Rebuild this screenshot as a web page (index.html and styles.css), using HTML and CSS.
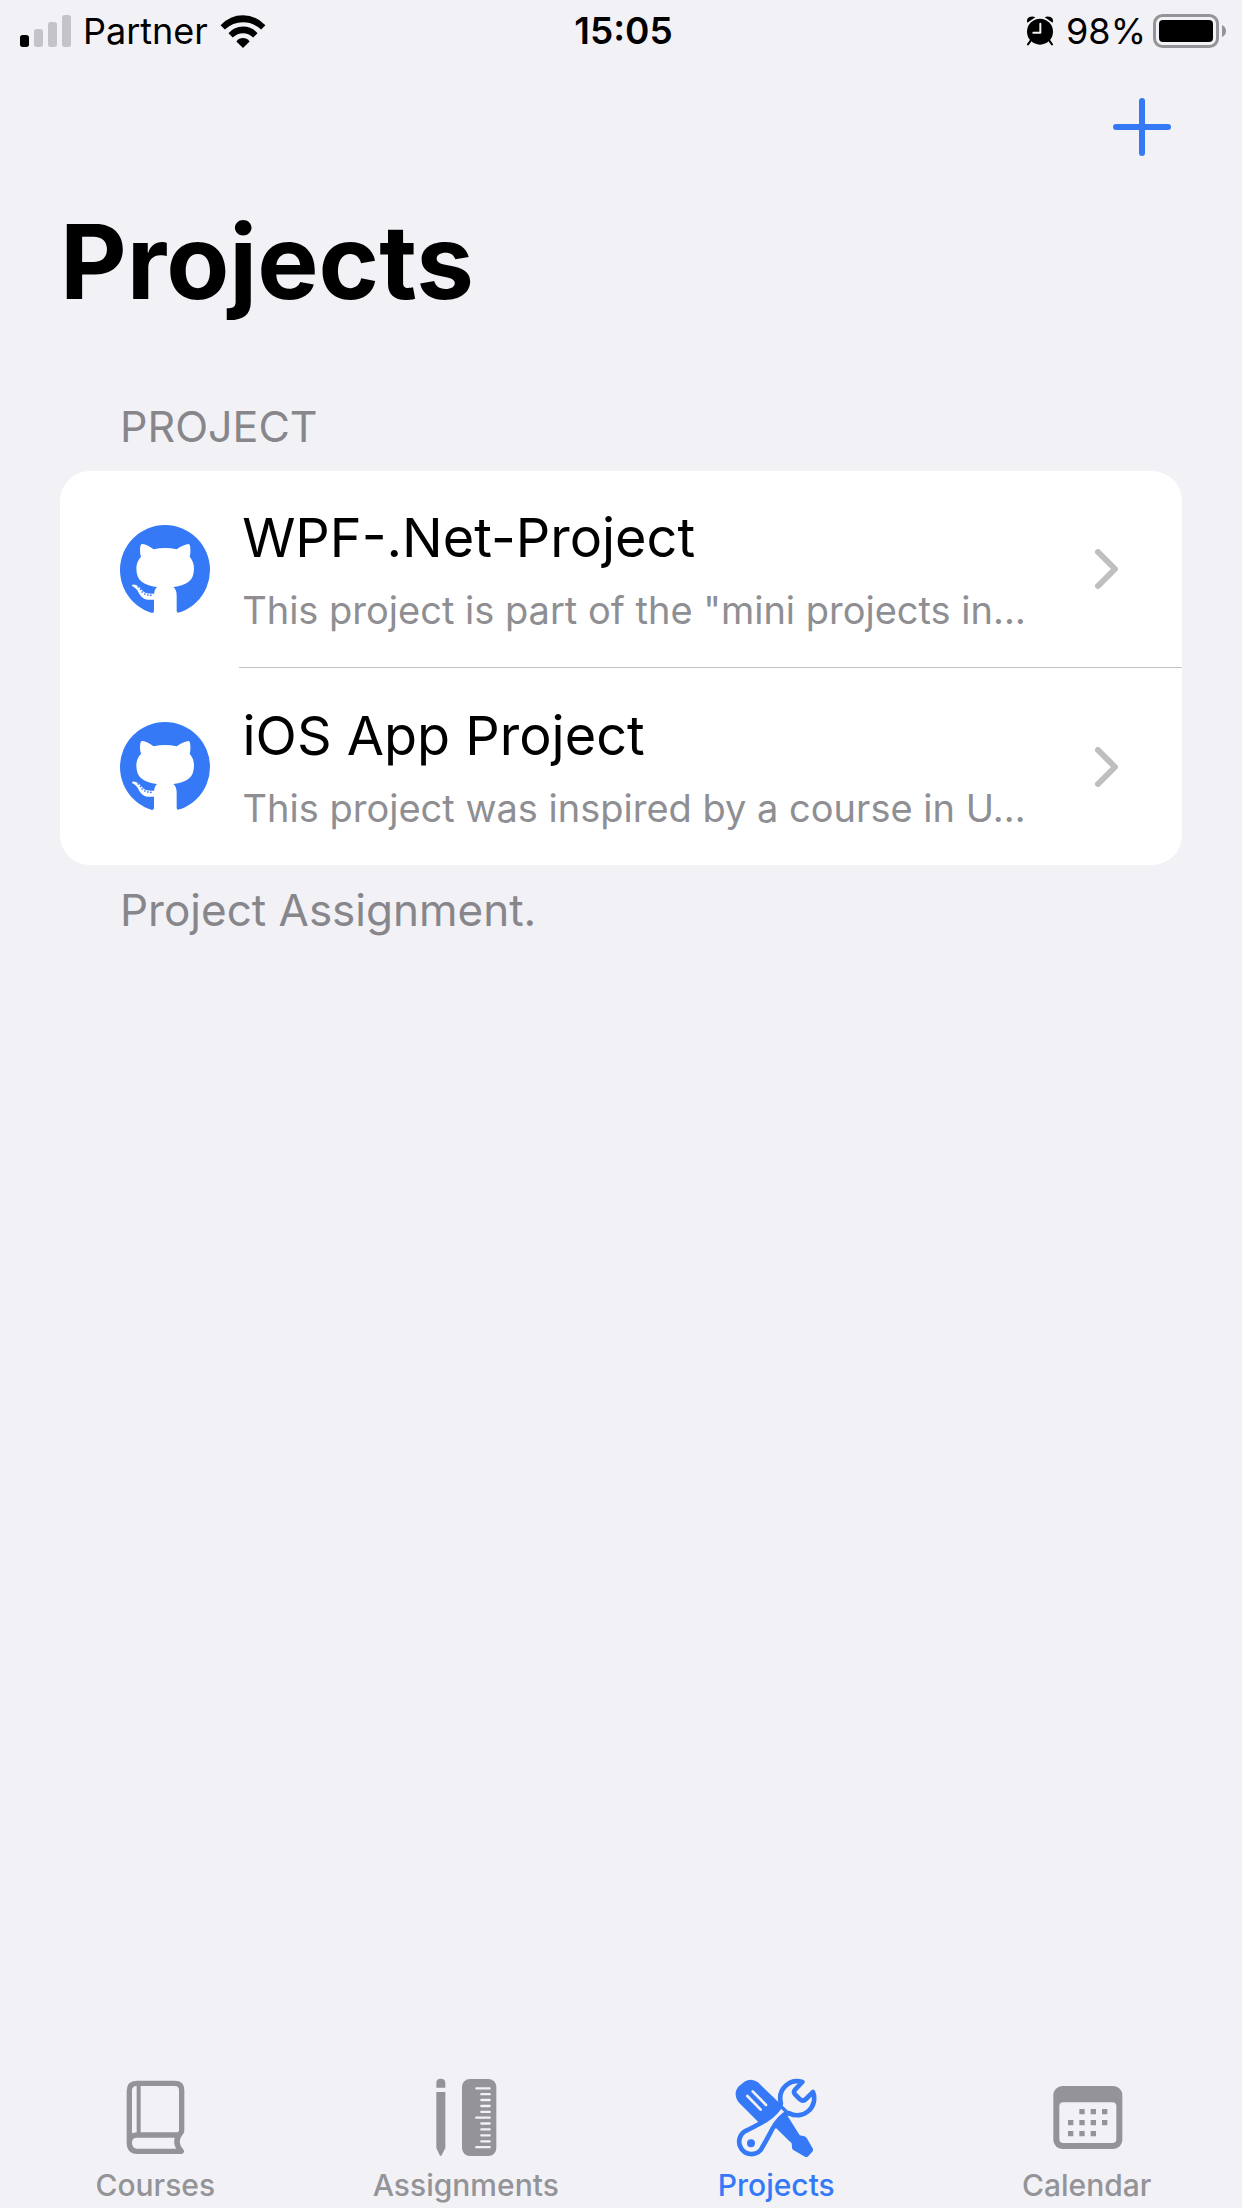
FILE: index.html
```html
<!DOCTYPE html>
<html lang="en">
<head>
<meta charset="utf-8">
<meta name="viewport" content="width=device-width, initial-scale=1">
<title>Projects</title>
<link rel="stylesheet" href="styles.css">
</head>
<body>
<div class="app">
  <header class="status-bar">
    <div class="status-left">
      <svg class="signal" viewBox="0 0 153 96" aria-hidden="true">
        <rect x="0" y="60" width="27" height="36" rx="8" fill="#000"/>
        <rect x="42" y="42" width="27" height="54" rx="8" fill="#c3c3c8"/>
        <rect x="84" y="21" width="27" height="75" rx="8" fill="#c3c3c8"/>
        <rect x="126" y="0" width="27" height="96" rx="8" fill="#c3c3c8"/>
      </svg>
      <span>Partner</span>
      <svg class="wifi" viewBox="660 38 138 100" aria-hidden="true">
        <path d="M661 69 Q690 39 729 39 Q768 39 797 69 L784 82 Q760 60 729 60 Q698 60 674 82Z"/>
        <path d="M685 93 Q703 73 729 73 Q755 73 773 93 L760 106 Q746 93 729 93 Q712 93 698 106Z"/>
        <path d="M709 118 Q717 108 729 108 Q741 108 749 118 L729 138Z"/>
      </svg>
    </div>
    <time class="clock">15:05</time>
    <div class="status-right">
      <svg class="alarm" viewBox="0 0 84 90" aria-hidden="true">
        <circle cx="42" cy="47" r="39"/>
        <path d="M4 20 Q0 8 10 3 Q20 -1 28 4Z M80 20 Q84 8 74 3 Q64 -1 56 4Z"/>
        <path d="M14 74 L6 85 M70 74 L78 85" stroke="#000" stroke-width="6" stroke-linecap="round"/>
        <path d="M43 23 V50 H22" fill="none" stroke="#f2f1f6" stroke-width="6" stroke-linecap="round" stroke-linejoin="round"/>
      </svg>
      <div class="charge">
        <span>98%</span>
        <svg class="battery" viewBox="0 0 74 34" aria-hidden="true">
          <rect x="1.5" y="1.5" width="63" height="31" rx="8" fill="none" stroke="#949498" stroke-width="3"/>
          <rect x="6" y="6" width="54" height="22" rx="4"/>
          <path d="M69 11 Q73 13 73 17 Q73 21 69 23Z" fill="#949498"/>
        </svg>
      </div>
    </div>
  </header>

  <nav class="nav-bar">
    <button class="add" type="button" aria-label="Add project">
      <svg viewBox="0 0 58 58" aria-hidden="true"><path d="M29 3 V55 M3 29 H55"/></svg>
    </button>
  </nav>

  <main class="content">
    <h1>Projects</h1>
    <section>
      <h2>PROJECT</h2>
      <ul class="card">
        <li>
          <a class="row" href="#wpf">
            <svg class="mark" viewBox="30 33 270 270" aria-hidden="true"><use href="#octocat"/></svg>
            <div class="cell">
              <div class="slot">
                <div class="text">
                  <div class="name">WPF-.Net-Project</div>
                  <div class="summary">This project is part of the "mini projects in…</div>
                </div>
              </div>
              <svg class="chevron" viewBox="0 0 24 40" aria-hidden="true"><path d="M3 3 L20 20 L3 37"/></svg>
            </div>
          </a>
        </li>
        <li>
          <a class="row" href="#ios">
            <svg class="mark" viewBox="30 33 270 270" aria-hidden="true"><use href="#octocat"/></svg>
            <div class="cell">
              <div class="slot">
                <div class="text">
                  <div class="name">iOS App Project</div>
                  <div class="summary">This project was inspired by a course in U…</div>
                </div>
              </div>
              <svg class="chevron" viewBox="0 0 24 40" aria-hidden="true"><path d="M3 3 L20 20 L3 37"/></svg>
            </div>
          </a>
        </li>
      </ul>
      <p class="note">Project Assignment.</p>
    </section>
  </main>

  <nav class="tab-bar">
    <a class="tab" href="#courses">
      <svg viewBox="91 45 270 255" aria-hidden="true">
        <path d="M149 247 V92 Q149 70 171 70 H285 Q306 70 306 90 V212 Q306 216 302 220 Q280 246 305 274 H172 Q149 274 149 247 Q149 225 172 225 H298" fill="none" stroke="currentColor" stroke-width="16" stroke-linejoin="round"/>
        <path d="M177 72 V222" fill="none" stroke="currentColor" stroke-width="12"/>
      </svg>
      <span>Courses</span>
    </a>
    <a class="tab" href="#assignments">
      <svg viewBox="212 45 270 255" aria-hidden="true">
        <path fill="currentColor" d="M258 83 V68 Q258 56 271 56 Q285 56 285 68 V83Z M258 96 H285 V264 L274 286 Q271 290 268 286 L258 264Z"/>
        <rect x="335" y="57" width="103" height="231" rx="24" fill="currentColor"/>
        <path d="M378 85 H418 M393 102.500 H418 M393 120 H418 M393 138 H418 M393 155.500 H418 M378 173 H418 M393 190.500 H418 M393 208 H418 M393 226 H418 M393 244 H418 M378 261.500 H418" stroke="#f2f1f6" stroke-width="7" stroke-linecap="round"/>
      </svg>
      <span>Assignments</span>
    </a>
    <a class="tab active" href="#projects" aria-current="page">
      <svg viewBox="124 45 270 255" aria-hidden="true">
        <path fill="currentColor" d="M145 81 L164 65 Q185 52 205 67 L270 130 L330 226 L344 229 Q350 231 353 237 L370 267 Q371 272 368 275 L354 290 Q350 292 346 290 L311 270 Q306 267 307 260 L306 250 L262 206 L208 188 L146 126 Q130 103 145 81Z"/>
        <path d="M173 108 L213 149 M189 94 L229 135" stroke="#f2f1f6" stroke-width="8" stroke-linecap="round"/>
        <path fill="currentColor" d="M270 130 L285 180 L330 226 L300 244 L262 206Z"/>
        <path d="M338 66 A51 51 0 0 0 273 126 Q275 136 268 144 Q250 170 214 189 Q190 202 174 210 A37 37 0 1 0 213 270 Q224 252 239 224 Q258 184 282 165 Q290 158 299 160 A51 51 0 0 0 370 96 L349 117 Q340 126 331 118 L316 103 Q310 96 317 88Z" fill="#f2f1f6" stroke="currentColor" stroke-width="14" stroke-linejoin="round"/>
        <path d="M272 137 L300 165" fill="none" stroke="currentColor" stroke-width="10"/>
        <circle cx="184" cy="250" r="12" fill="currentColor"/>
      </svg>
      <span>Projects</span>
    </a>
    <a class="tab" href="#calendar">
      <svg viewBox="125 45 270 255" aria-hidden="true">
        <rect x="159" y="78" width="207" height="189" rx="27" fill="currentColor"/>
        <rect x="177" y="127" width="171" height="122" rx="12" fill="#f2f1f6"/>
        <path d="M237 155 h16 M271 155 h16 M305 155 h16 M203 188 h16 M237 188 h16 M271 188 h16 M305 188 h16 M203 221 h16 M237 221 h16 M271 221 h16" stroke="currentColor" stroke-width="16"/>
      </svg>
      <span>Calendar</span>
    </a>
  </nav>
</div>

<svg class="defs" aria-hidden="true">
  <symbol id="octocat" overflow="visible">
    <circle cx="165" cy="168" r="135" fill="#3579f7"/>
    <path fill="#fff" d="M95 90 Q90 92 90 110 Q90 120 93 128 Q79 143 79 163 C79 200 100 214 141 219 Q132 227 132 245 V290 Q132 298 124 297 V310 H208 V297 Q200 298 200 290 V245 Q200 227 190 219 C232 214 252 200 252 163 Q252 143 239 128 Q242 120 241 105 Q241 92 236 90 Q222 91 200 106 Q165 98 131 106 Q109 90 95 90Z"/>
    <path fill="#fff" d="M66 214 Q68 210 78 213 Q89 218 96 228 Q106 242 134 239 V257 C104 260 95 252 86 236 Q80 222 66 216Z"/>
    <path d="M84 219 h1 M91 226 h1 M96 234 h1 M104 240 h1 M113 243 h1 M122 244 h1" stroke="#3579f7" stroke-width="5" stroke-linecap="round"/>
  </symbol>
</svg>
</body>
</html>
```
FILE: styles.css
```css
* { box-sizing: border-box; }

body {
  margin: 0;
  background: #f2f1f6;
  color: #000;
  font-family: Inter, "Liberation Sans", sans-serif;
}

h1, h2, p, ul { margin: 0; padding: 0; }
svg { display: block; flex: none; }
a { color: inherit; text-decoration: none; }

.app {
  display: flex;
  flex-direction: column;
  min-height: 100vh;
}

.status-bar {
  display: grid;
  grid-template-columns: 1fr auto 1fr;
  align-items: center;
  height: 60px;
  padding: 2px 15px 0 20px;
  font-size: 36px;
  line-height: 44px;
}
.status-left, .status-right, .charge {
  display: flex;
  align-items: center;
}
.status-left, .status-right { gap: 12px; }
.status-right { justify-content: flex-end; }
.charge { gap: 7px; }
.signal { width: 51px; height: 32px; }
.wifi { width: 46px; height: 33px; }
.alarm { width: 28px; height: 30px; }
.battery { width: 74px; height: 34px; }
.clock { font-size: 37px; font-weight: 600; }

.nav-bar {
  display: flex;
  justify-content: flex-end;
  height: 132px;
  padding: 38px 71px 0;
}
.add {
  width: 58px;
  height: 58px;
  padding: 0;
  border: 0;
  background: none;
}
.add svg { width: 58px; height: 58px; }
.add path { stroke: #3579f7; stroke-width: 6; stroke-linecap: round; }

.content { flex: 1; padding: 8px 60px 0; }

h1 {
  font-size: 103px;
  line-height: 124px;
  font-weight: 700;
}
h2, .note {
  padding: 0 60px;
  color: #87868b;
  font-size: 43px;
  line-height: 52px;
  font-weight: 400;
}
h2 { padding-top: 76px; padding-bottom: 19px; }
.note { padding-top: 19px; font-size: 44px; }

.card {
  list-style: none;
  overflow: hidden;
  border-radius: 30px;
  background: #fff;
}
.row {
  display: flex;
  align-items: center;
  gap: 29px;
  height: 197px;
  padding-left: 60px;
}
.mark { width: 90px; height: 90px; }
.cell {
  display: flex;
  flex: 1;
  align-items: center;
  align-self: stretch;
  justify-content: space-between;
  min-width: 0;
  padding-right: 63px;
}
li:first-child .cell { border-bottom: 1px solid #c3c3c6; }
.slot {
  display: flex;
  flex: 1;
  justify-content: center;
  min-width: 0;
  margin-right: 66px;
}
.text { min-width: 0; }
.name {
  font-size: 54px;
  line-height: 68px;
  white-space: nowrap;
}
.summary {
  margin-top: 14px;
  color: #8e8e93;
  font-size: 38px;
  line-height: 48px;
  white-space: nowrap;
}
.chevron { width: 24px; height: 40px; }
.chevron path {
  fill: none;
  stroke: #bfbfbf;
  stroke-width: 6;
  stroke-linecap: round;
  stroke-linejoin: round;
}

.tab-bar {
  position: sticky;
  bottom: 0;
  display: grid;
  grid-template-columns: repeat(4, 1fr);
  padding-bottom: 5px;
  background: #f2f1f6;
}
.tab {
  display: flex;
  flex-direction: column;
  align-items: center;
  gap: 7px;
  color: #939398;
  font-size: 30px;
  line-height: 36px;
  font-weight: 500;
}
.tab svg { width: 90px; height: 85px; }
.tab.active { color: #3579f7; }

.defs { position: absolute; width: 0; height: 0; }
```
